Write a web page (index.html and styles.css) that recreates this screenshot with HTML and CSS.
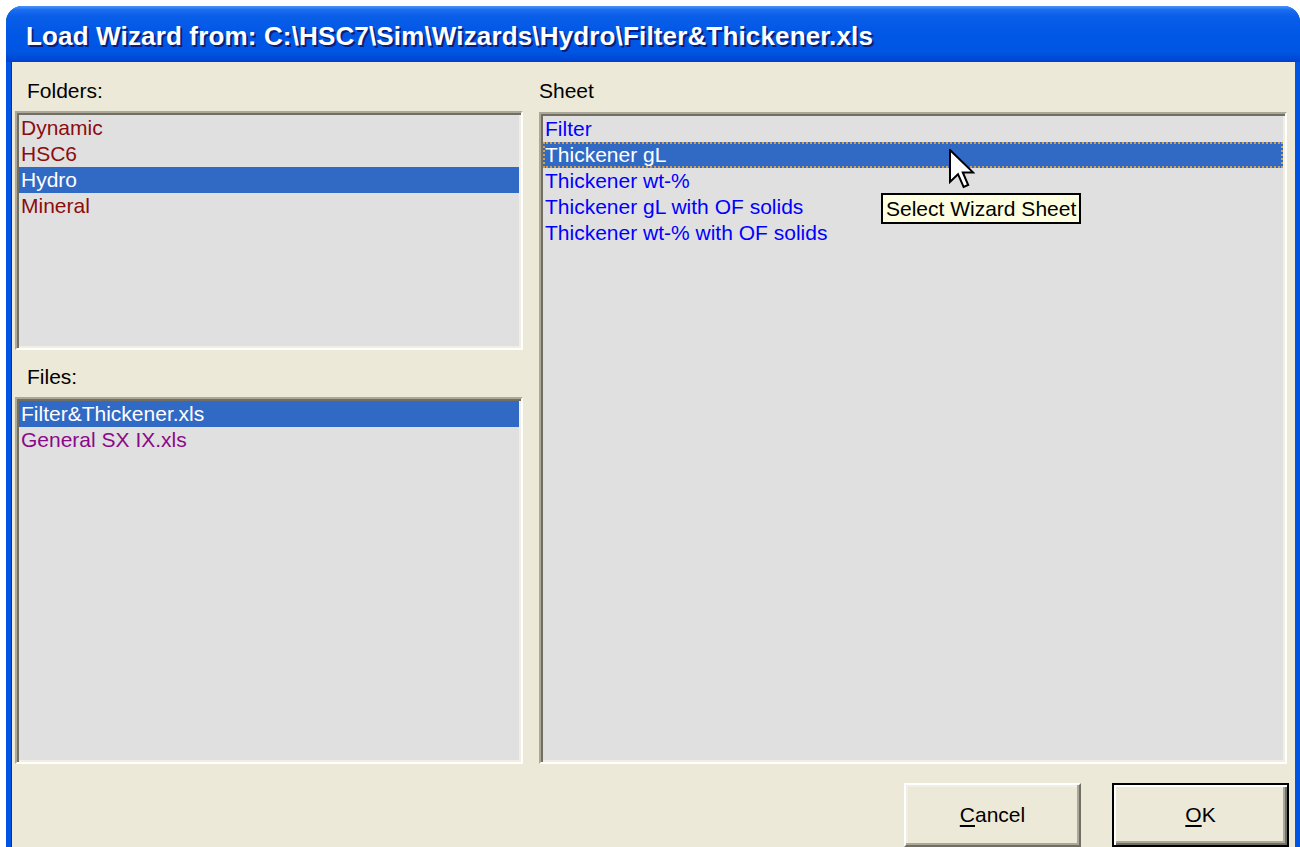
FILE: index.html
```html
<!DOCTYPE html>
<html lang="en">
<head>
<meta charset="utf-8">
<title>Load Wizard</title>
<link rel="stylesheet" href="styles.css">
</head>
<body>
<div class="window">
  <div class="titlebar">
    <span class="title">Load Wizard from: C:\HSC7\Sim\Wizards\Hydro\Filter&amp;Thickener.xls</span>
  </div>
  <div class="client">
    <div class="panes">
      <div class="col col-left">
        <div class="label">Folders:</div>
        <ul class="listbox folders">
          <li class="item folder">Dynamic</li>
          <li class="item folder">HSC6</li>
          <li class="item folder selected">Hydro</li>
          <li class="item folder">Mineral</li>
        </ul>
        <div class="label label-files">Files:</div>
        <ul class="listbox files">
          <li class="item file selected">Filter&amp;Thickener.xls</li>
          <li class="item file">General SX IX.xls</li>
        </ul>
      </div>
      <div class="col col-right">
        <div class="label">Sheet</div>
        <ul class="listbox sheets">
          <li class="item sheet">Filter</li>
          <li class="item sheet selected focused">Thickener gL</li>
          <li class="item sheet">Thickener wt-%</li>
          <li class="item sheet">Thickener gL with OF solids</li>
          <li class="item sheet">Thickener wt-% with OF solids</li>
        </ul>
        <div class="tooltip">Select Wizard Sheet</div>
        <svg class="cursor" width="26" height="40" viewBox="0 0 13 20">
          <path d="M0.5 0.5 L0.5 16.5 L4.5 12.6 L7.3 19 L9.6 18 L6.9 11.7 L12 11.7 Z" fill="#fff" stroke="#000" stroke-width="1" stroke-linejoin="miter"/>
        </svg>
      </div>
    </div>
    <div class="buttons">
      <button class="btn"><span class="acc">C</span>ancel</button>
      <button class="btn btn-default"><span class="acc">O</span>K</button>
    </div>
  </div>
</div>
</body>
</html>
```

FILE: styles.css
```css
html, body {
  margin: 0;
  padding: 0;
  background: #ffffff;
  overflow: hidden;
}

body {
  width: 1300px;
  height: 847px;
  font-family: "Liberation Sans", Arial, sans-serif;
}

.window {
  margin: 6px 0 0 6px;
  width: 1294px;
  height: 841px;
  display: flex;
  flex-direction: column;
  border-radius: 16px 16px 0 0;
  background: #0054e3;
  overflow: hidden;
}

.titlebar {
  height: 56px;
  flex: 0 0 56px;
  display: flex;
  align-items: center;
  padding-left: 20px;
  background: linear-gradient(to bottom,
    #4a96fa 0px, #1a6cf0 4px, #0a5ee8 10px, #0057e6 30px,
    #0055e3 46px, #0048d6 53px, #003fc8 56px);
}

.title {
  color: #ffffff;
  font-family: "Liberation Sans", Arial, sans-serif;
  font-weight: bold;
  font-size: 26px;
  letter-spacing: 0.15px;
  text-shadow: 2px 2px 0 #0a1f7a;
  white-space: nowrap;
  margin-top: 4px;
}

.client {
  flex: 1;
  margin: 0 5px 0 5px;
  background: #ece9d8;
  display: flex;
  flex-direction: column;
  padding: 16px 8px 0 3px;
  position: relative;
  border-left: 1px solid #0030b0;
}

.panes {
  display: flex;
  gap: 16px;
  height: 686px;
}

.col {
  display: flex;
  flex-direction: column;
  position: relative;
}

.col-left {
  width: 508px;
}

.col-right {
  flex: 1;
}

.label {
  font-size: 21px;
  line-height: 26px;
  color: #000;
  padding-left: 12px;
  height: 26px;
  margin-bottom: 7px;
}

.col-right .label {
  padding-left: 0;
  margin-bottom: 8px;
}

.label-files {
  margin-top: 14px;
}

.listbox {
  list-style: none;
  margin: 0;
  padding: 2px 2px;
  background: #e0e0e0;
  border-style: solid;
  border-width: 2px;
  border-color: #aca899 #ffffff #ffffff #aca899;
  box-shadow: inset 2px 2px 0 #716f64, inset -2px -2px 0 #f1efe2;
}

.folders {
  height: 231px;
  flex: 0 0 auto;
}

.files {
  flex: 1;
}

.sheets {
  flex: 1;
}

.item {
  font-size: 21px;
  line-height: 26px;
  height: 26px;
  padding-left: 2px;
  white-space: nowrap;
  box-sizing: border-box;
}

.folder { color: #8c0d0d; }
.file { color: #8a0a8a; }
.sheet { color: #0000ff; }

.item.selected {
  background: #316ac5;
  color: #ffffff;
}

.item.focused {
  outline: 2px dotted #d2a050;
  outline-offset: -2px;
}

.tooltip {
  position: absolute;
  left: 342px;
  top: 115px;
  background: #ffffe1;
  border: 2px solid #000;
  font-size: 21px;
  line-height: 26px;
  padding: 1px 3px 0 3px;
  color: #000;
  white-space: nowrap;
}

.cursor {
  position: absolute;
  left: 410px;
  top: 71px;
}

.buttons {
  display: flex;
  justify-content: flex-end;
  gap: 31px;
  margin-top: 19px;
  margin-right: -2px;
}

.btn {
  width: 177px;
  height: 64px;
  background: #ece9d8;
  font-family: "Liberation Sans", Arial, sans-serif;
  font-size: 21px;
  color: #000;
  border-style: solid;
  border-width: 2px;
  border-color: #ffffff #716f64 #716f64 #ffffff;
  box-shadow: inset -2px -2px 0 #aca899, inset 2px 2px 0 #f1efe2;
  padding: 0;
  margin: 0;
}

.btn-default {
  border: 2px solid #000;
  box-shadow: inset 2px 2px 0 #ffffff, inset -2px -2px 0 #716f64, inset -4px -4px 0 #aca899;
}

.acc {
  text-decoration: underline;
  text-underline-offset: 3px;
}
```
